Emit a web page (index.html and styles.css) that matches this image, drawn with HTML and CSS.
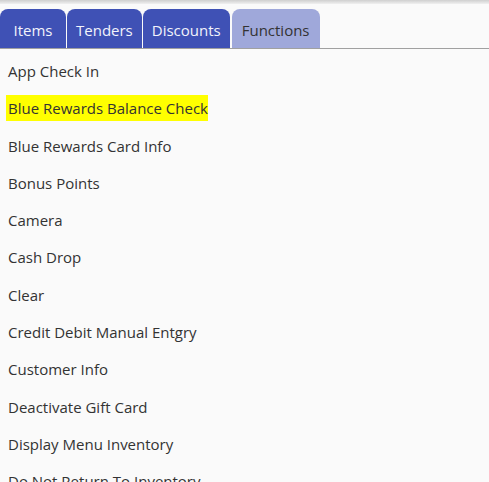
FILE: index.html
```html
<!DOCTYPE html>
<html lang="en">

<head>
  <meta charset="UTF-8">
  <meta name="viewport" content="width=device-width, initial-scale=1.0">
  <title>Functions</title>
  <link rel="stylesheet" href="styles.css">
</head>

<body>
  <div class="topbar"></div>

  <!-- Category tabs -->
  <div class="tabs">
    <div class="tab">Items</div>
    <div class="tab">Tenders</div>
    <div class="tab">Discounts</div>
    <div class="tab active">Functions</div>
  </div>

  <!-- Function list -->
  <ul class="func-list">
    <li>App Check In</li>
    <li><span class="marked">Blue Rewards Balance Check</span></li>
    <li>Blue Rewards Card Info</li>
    <li>Bonus Points</li>
    <li>Camera</li>
    <li>Cash Drop</li>
    <li>Clear</li>
    <li>Credit Debit Manual Entgry</li>
    <li>Customer Info</li>
    <li>Deactivate Gift Card</li>
    <li>Display Menu Inventory</li>
    <li>Do Not Return To Inventory</li>
  </ul>
</body>

</html>
```

FILE: styles.css
```css
html, body {
  height: 100%;
  overflow: hidden;
}

body {
  margin: 0;
  background: #fafafa;
  font-family: "Open Sans", "Noto Sans", sans-serif;
  color: #333;
}

.topbar {
  height: 4px;
  background: linear-gradient(#cfcfcf, #f0f0f0);
  margin-bottom: 5px;
}

.tabs {
  display: flex;
  gap: 1px;
  border-bottom: 1px solid #a0a0a0;
}

.tab {
  min-width: 48px;
  background: #3f51b5;
  color: #f2f3fb;
  font-size: 15px;
  text-align: center;
  height: 39px;
  line-height: 42px;
  padding: 0 9px;
  border-radius: 8px 8px 0 0;
}

.tab.active {
  background: #9fa8da;
  color: #333;
  margin-left: 1px;
  padding: 0 10px;
}

.func-list {
  list-style: none;
  margin: 0;
  padding: 0 8px;
}

.func-list li {
  height: 37.3px;
  line-height: 44px;
  font-size: 15px;
  white-space: nowrap;
}

.marked {
  background: #ffff00;
  padding: 3px 0 3px 2px;
  margin-left: -2px;
}
```
